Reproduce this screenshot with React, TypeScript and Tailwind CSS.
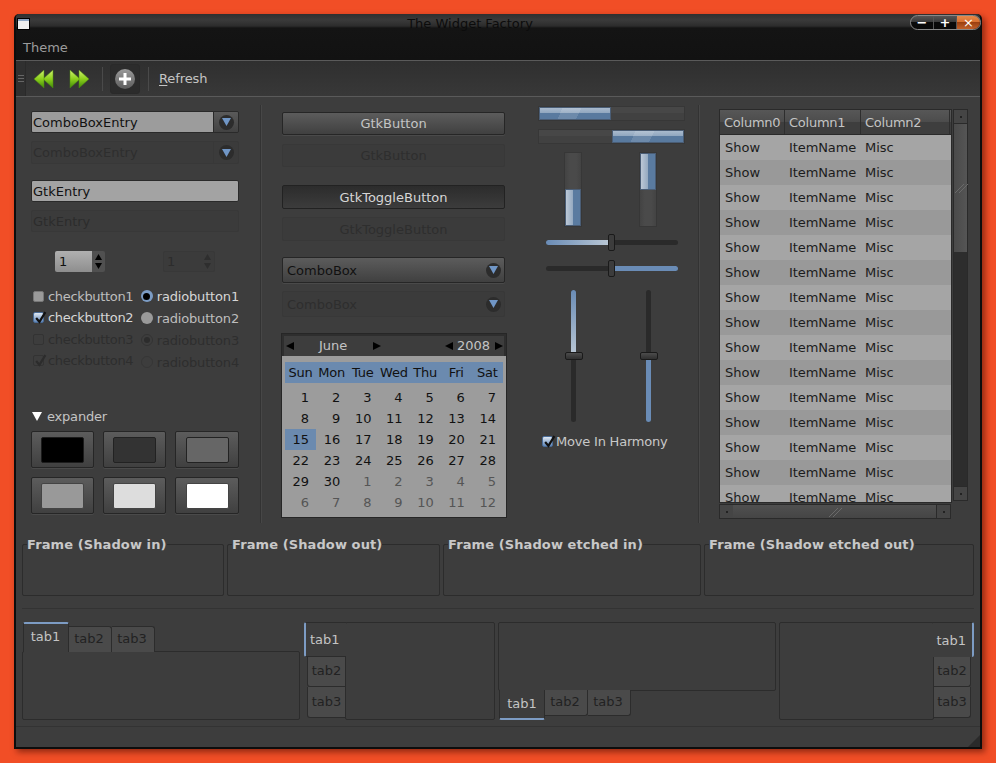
import type { FC, ReactNode } from "react";
import clsx from "clsx";

const btn = "border border-[#262626] rounded-[2px] bg-[linear-gradient(#5c5c5c,#404040)] shadow-[0_1px_0_#4a4a4a]";
const off = "border border-[#383838] rounded-[2px] bg-[#3b3b3b]";

const Tri: FC<{ dir: "up" | "down" | "left" | "right"; className?: string; w?: number; h?: number }> = ({
  dir,
  className,
  w = 8,
  h = 8,
}) => {
  const pts = { up: "4,0 8,8 0,8", down: "0,0 8,0 4,8", left: "8,0 8,8 0,4", right: "0,0 8,4 0,8" }[dir];
  return (
    <svg viewBox="0 0 8 8" width={w} height={h} preserveAspectRatio="none" className={clsx("fill-current shrink-0", className)}>
      <polygon points={pts} />
    </svg>
  );
};

const BlueArrow = () => (
  <span className="flex h-[15px] w-[15px] items-center justify-center rounded-full bg-[#2c2c2c]">
    <Tri dir="down" w={9} h={8} className="text-[#7096c6]" />
  </span>
);

const Check: FC<{ className?: string }> = ({ className }) => (
  <svg viewBox="0 0 12 12" className={clsx("absolute -top-[2px] left-0 h-[13px] w-[13px] fill-none stroke-[2]", className)}>
    <path d="M2 6.5 L5 10 L10.5 1" />
  </svg>
);

const CheckBox: FC<{ state: "plain" | "checked" | "off" | "offChecked" }> = ({ state }) => (
  <span
    className={clsx(
      "relative h-[11px] w-[11px] shrink-0 rounded-[2px]",
      state === "plain" && "bg-[#9a9a9a] border border-[#777]",
      state === "checked" && "bg-[linear-gradient(#dfe8f2,#5f86b8)] border border-[#4a6c98]",
      (state === "off" || state === "offChecked") && "border border-[#333]",
    )}
  >
    {state === "checked" && <Check className="stroke-[#111]" />}
    {state === "offChecked" && <Check className="stroke-[#2c2c2c]" />}
  </span>
);

const Radio: FC<{ state: "on" | "plain" | "offOn" | "off" }> = ({ state }) => (
  <span
    className={clsx(
      "flex h-[12px] w-[12px] shrink-0 items-center justify-center rounded-full",
      state === "on" && "bg-[#7c9cc4]",
      state === "plain" && "bg-[#9a9a9a]",
      state === "offOn" && "border border-[#333]",
      state === "off" && "border border-[#363636]",
    )}
  >
    {state === "on" && <span className="h-[7px] w-[7px] rounded-full bg-black" />}
    {state === "offOn" && <span className="h-[6px] w-[6px] rounded-full bg-[#2c2c2c]" />}
  </span>
);

const swatches = [
  "bg-[#000] border-[#1c1c1c]",
  "bg-[#333] border-[#222]",
  "bg-[#666] border-[#222]",
  "bg-[#999] border-[#444]",
  "bg-[#ddd] border-[#444]",
  "bg-[#fff] border-[#444]",
];

const LeftColumn = () => (
  <div className="ml-[15px] w-[208px] shrink-0">
    <div className="mt-[14px] flex h-[22px] overflow-hidden rounded-[2px] border border-[#2a2a2a]">
      <div className="flex flex-1 items-center bg-[#9c9c9c] pl-[1px] text-[#111]">ComboBoxEntry</div>
      <div className="flex w-[25px] items-center justify-center border-l border-[#2a2a2a] bg-[linear-gradient(#5a5a5a,#424242)]">
        <BlueArrow />
      </div>
    </div>
    <div className={clsx(off, "mt-[8px] flex h-[23px]")}>
      <div className="flex flex-1 items-center pl-[1px] text-[#2e2e2e]">ComboBoxEntry</div>
      <div className="flex w-[25px] items-center justify-center border-l border-[#383838]">
        <BlueArrow />
      </div>
    </div>
    <div className="mt-[16px] flex h-[22px] items-center rounded-[2px] border border-[#2a2a2a] bg-[#a3a3a3] pl-[1px] text-[#111]">GtkEntry</div>
    <div className={clsx(off, "mt-[8px] flex h-[22px] items-center pl-[1px] text-[#2c2c2c]")}>GtkEntry</div>
    <div className="mt-[19px] flex h-[21px]">
      <div className="ml-[24px] flex w-[50px] overflow-hidden rounded-[2px]">
        <div className="flex w-[37px] items-center bg-[linear-gradient(#b0b0b0,#8e8e8e)] pl-[4px] text-[#111]">1</div>
        <div className="flex w-[13px] flex-col items-center justify-center gap-[3px] bg-[#505050] text-black">
          <Tri dir="up" w={7} h={6} />
          <Tri dir="down" w={7} h={6} />
        </div>
      </div>
      <div className={clsx(off, "ml-[58px] flex w-[52px]")}>
        <div className="flex w-[38px] items-center pl-[3px] text-[#2c2c2c]">1</div>
        <div className="flex w-[13px] flex-col items-center justify-center gap-[3px] text-[#2e2e2e]">
          <Tri dir="up" w={7} h={6} />
          <Tri dir="down" w={7} h={6} />
        </div>
      </div>
    </div>
    <div className="ml-[2px] mt-[14px] flex">
      <div className="flex w-[111px] flex-col tracking-[-0.33px]">
        {(
          [
            ["plain", "checkbutton1", "text-[#bdbdbd]"],
            ["checked", "checkbutton2", "text-[#d6d6d6]"],
            ["off", "checkbutton3", "text-[#2e2e2e]"],
            ["offChecked", "checkbutton4", "text-[#2e2e2e]"],
          ] as const
        ).map(([state, label, color]) => (
          <div key={label} className="flex h-[21.3px] items-center gap-[4px]">
            <CheckBox state={state} />
            <span className={color}>{label}</span>
          </div>
        ))}
      </div>
      <div className="-mt-[1px] flex flex-col tracking-[-0.17px]">
        {(
          [
            ["on", "radiobutton1", "text-[#d6d6d6]"],
            ["plain", "radiobutton2", "text-[#bdbdbd]"],
            ["offOn", "radiobutton3", "text-[#2e2e2e]"],
            ["off", "radiobutton4", "text-[#2e2e2e]"],
          ] as const
        ).map(([state, label, color]) => (
          <div key={label} className="flex h-[22px] items-center gap-[4px]">
            <Radio state={state} />
            <span className={color}>{label}</span>
          </div>
        ))}
      </div>
    </div>
    <div className="ml-[1px] mt-[33px] flex h-[20px] items-center gap-[5px] tracking-[-0.2px] text-[#c4c4c4]">
      <Tri dir="down" w={10} h={9} className="text-white" />
      <span>expander</span>
    </div>
    <div className="mt-[5px] grid grid-cols-[63px_63px_64px] gap-x-[9px] gap-y-[9px]">
      {swatches.map((s) => (
        <div key={s} className={clsx(btn, "flex h-[37px] items-center justify-center")}>
          <span className={clsx("h-[26px] w-[43px] rounded-[2px] border", s)} />
        </div>
      ))}
    </div>
  </div>
);

const VSep = () => <div className="mt-[8px] h-[418px] w-[1px] shrink-0 bg-[#333] shadow-[1px_0_0_#474747]" />;

const days = ["Sun", "Mon", "Tue", "Wed", "Thu", "Fri", "Sat"];
const cells = [
  1, 2, 3, 4, 5, 6, 7, 8, 9, 10, 11, 12, 13, 14, 15, 16, 17, 18, 19, 20, 21, 22, 23, 24, 25, 26, 27, 28, 29, 30, 1, 2, 3, 4,
  5, 6, 7, 8, 9, 10, 11, 12,
];

const Calendar = () => (
  <div className="-ml-[1px] mt-[16px] h-[185px] w-[226px] border border-[#262626] bg-[#9c9c9c]">
    <div className="flex h-[22px] items-center border-2 border-b-0 border-[#2e2e2e] bg-[#3d3d3d] pb-[1px] text-[#c4c4c4]">
      <Tri dir="left" className="ml-[2px] text-black" />
      <span className="ml-[25px] w-[28px]">June</span>
      <Tri dir="right" className="ml-[26px] text-black" />
      <Tri dir="left" className="ml-auto text-black" />
      <span className="ml-[4px] mr-[5px]">2008</span>
      <Tri dir="right" className="mr-[1px] text-black" />
    </div>
    <div className="px-[3px] pt-[6px]">
      <div className="grid h-[21px] grid-cols-7 items-center bg-[#6b8aaf] text-center tracking-[-0.2px] text-[#111]">
        {days.map((d) => (
          <span key={d}>{d}</span>
        ))}
      </div>
      <div className="mt-[4px] grid grid-cols-7 auto-rows-[21px] items-center text-right">
        {cells.map((n, i) => (
          <span
            key={i}
            className={clsx(
              "flex h-[21px] items-center justify-end pr-[7px]",
              i === 14 && "bg-[#6b8aaf]",
              i < 30 ? "text-[#111]" : "text-[#555]",
            )}
          >
            {n}
          </span>
        ))}
      </div>
    </div>
  </div>
);

const CenterColumn = () => (
  <div className="ml-[21px] w-[223px] shrink-0">
    <div className={clsx(btn, "mt-[15px] flex h-[23px] items-center justify-center text-[#c4c4c4]")}>GtkButton</div>
    <div className={clsx(off, "mt-[9px] flex h-[23px] items-center justify-center text-[#2e2e2e]")}>GtkButton</div>
    <div className="mt-[18px] flex h-[24px] items-center justify-center rounded-[2px] border border-[#222] bg-[linear-gradient(#2c2c2c,#3c3c3c)] text-[#d6d6d6]">
      GtkToggleButton
    </div>
    <div className={clsx(off, "mt-[8px] flex h-[24px] items-center justify-center text-[#2e2e2e]")}>GtkToggleButton</div>
    <div className={clsx(btn, "mt-[16px] flex h-[26px] items-center justify-between pl-[4px] pr-[3px] text-[#111]")}>
      ComboBox
      <BlueArrow />
    </div>
    <div className={clsx(off, "mt-[8px] flex h-[26px] items-center justify-between pl-[4px] pr-[3px] text-[#2e2e2e]")}>
      ComboBox
      <BlueArrow />
    </div>
    <Calendar />
  </div>
);

const fillH =
  "bg-[linear-gradient(115deg,transparent_30%,rgba(255,255,255,0.12)_30%,rgba(255,255,255,0.12)_55%,transparent_55%),linear-gradient(#a9bacd,#8ea5be_50%,#597a9f_50%,#597a9f)] border border-[#4a5d75]";
const fillV = "bg-[linear-gradient(90deg,#bcc8d6,#94a9c0_50%,#5a7ba0_50%,#5a7ba0)] border border-[#4a5d75]";
const troughH = "border border-[#373737] bg-[linear-gradient(#474747,#474747_50%,#414141_50%)]";
const troughV = "border border-[#373737] bg-[linear-gradient(90deg,#434343,#4a4a4a_30%,#4a4a4a_70%,#434343)]";

const ThumbH = () => <span className="absolute -top-[6px] left-[62px] h-[17px] w-[7px] rounded-[2px] border border-[#1a1a1a] bg-[#3c3c3c]" />;
const ThumbV = () => (
  <span className="absolute left-1/2 top-[62px] h-[8px] w-[18px] -translate-x-1/2 rounded-[2px] border border-[#1a1a1a] bg-[linear-gradient(#4c4c4c,#303030)]" />
);

const RightColumn = () => (
  <div className="ml-[33px] w-[147px] shrink-0">
    <div className={clsx(troughH, "mt-[9px] h-[15px]")}>
      <div className={clsx(fillH, "h-full w-[72px]")} />
    </div>
    <div className={clsx(troughH, "mt-[8px] flex h-[15px] justify-end")}>
      <div className={clsx(fillH, "h-full w-[72px]")} />
    </div>
    <div className="mt-[8px] flex h-[75px] pl-[26px]">
      <div className={clsx(troughV, "flex w-[18px] flex-col justify-end")}>
        <div className={clsx(fillV, "h-[37px]")} />
      </div>
      <div className={clsx(troughV, "ml-[57px] w-[18px]")}>
        <div className={clsx(fillV, "h-[37px]")} />
      </div>
    </div>
    <div className="relative ml-[8px] mt-[13px] h-[5px] w-[132px] rounded-full bg-[#2a2a2a]">
      <div className="h-full w-[62px] rounded-l-full bg-[linear-gradient(90deg,#6a8cb6,#b8c6d4)]" />
      <ThumbH />
    </div>
    <div className="relative ml-[8px] mt-[21px] flex h-[5px] w-[132px] justify-end rounded-full bg-[#2a2a2a]">
      <div className="h-full w-[68px] rounded-r-full bg-[#6a8cb6]" />
      <ThumbH />
    </div>
    <div className="mt-[19px] flex h-[132px] pl-[33px]">
      <div className="relative h-full w-[5px] rounded-full bg-[#2a2a2a]">
        <div className="h-[64px] rounded-t-full bg-[linear-gradient(#6a8cb6,#b8c6d4)]" />
        <ThumbV />
      </div>
      <div className="relative ml-[70px] flex h-full w-[5px] flex-col justify-end rounded-full bg-[#2a2a2a]">
        <div className="h-[62px] rounded-b-full bg-[#6a8cb6]" />
        <ThumbV />
      </div>
    </div>
    <div className="ml-[4px] mt-[10px] flex h-[18px] items-center gap-[3px] tracking-[-0.2px] text-[#c8c8c8]">
      <CheckBox state="checked" />
      Move In Harmony
    </div>
  </div>
);

const ScrollBtn: FC<{ className?: string }> = ({ className }) => (
  <div className={clsx("flex h-[15px] w-[15px] shrink-0 items-center justify-center border border-[#2a2a2a] bg-[#454545]", className)}>
    <span className="h-[2px] w-[2px] bg-[#222]" />
  </div>
);

const Grip: FC<{ className?: string }> = ({ className }) => (
  <svg viewBox="0 0 14 10" className={clsx("h-[10px] w-[14px] fill-none stroke-[#6a6a6a]", className)}>
    <path d="M1 10 L10 1 M5 10 L14 1" />
  </svg>
);

const Tree = () => (
  <div className="ml-[20px] mt-[12px] flex shrink-0">
    <div>
      <div className="h-[394px] w-[233px] overflow-hidden border border-[#2a2a2a] bg-[#a5a5a5]">
        <div className="flex h-[25px] border-b border-[#2a2a2a] bg-[linear-gradient(#575757,#4c4c4c_50%,#3e3e3e_50%,#3e3e3e)] tracking-[-0.25px] text-[#c4c4c4]">
          <div className="flex w-[65px] items-center border-r border-[#2e2e2e] pl-[4px]">Column0</div>
          <div className="flex w-[76px] items-center border-r border-[#2e2e2e] pl-[4px]">Column1</div>
          <div className="flex w-[89px] items-center border-r border-[#2e2e2e] pl-[4px]">Column2</div>
        </div>
        {Array.from({ length: 15 }, (_, i) => (
          <div key={i} className={clsx("flex h-[25px] shrink-0 items-center text-[#1c1c1c]", i % 2 === 0 ? "bg-[#a5a5a5]" : "bg-[#999999]")}>
            <span className="w-[69px] pl-[5px]">Show</span>
            <span className="w-[76px] tracking-[-0.1px]">ItemName</span>
            <span>Misc</span>
          </div>
        ))}
      </div>
      <div className="mt-[1px] flex h-[15px] w-[232px] border border-[#2a2a2a]">
        <ScrollBtn className="-m-[1px]" />
        <div className="flex flex-1 items-center justify-center bg-[linear-gradient(#505050,#454545)]">
          <Grip />
        </div>
        <ScrollBtn className="-m-[1px]" />
      </div>
    </div>
    <div className="ml-[1px] flex h-[392px] w-[15px] flex-col border border-[#2a2a2a] bg-[#2d2d2d]">
      <ScrollBtn className="-mx-[1px] -mt-[1px]" />
      <div className="flex h-[128px] flex-col items-center justify-center bg-[linear-gradient(90deg,#4a4a4a,#555)]">
        <Grip />
      </div>
      <div className="flex-1" />
      <ScrollBtn className="-mx-[1px] -mb-[1px]" />
    </div>
  </div>
);

const Frame: FC<{ title: string; className: string }> = ({ title, className }) => (
  <fieldset className={clsx("h-[59px] rounded-[2px] border border-[#2c2c2c] pl-[4px]", className)}>
    <legend className="font-bold tracking-[0.1px] text-[#c8c8c8]">{title}</legend>
  </fieldset>
);

const tabIdle = "flex items-center justify-center border border-[#2c2c2c] bg-[#4a4a4a] text-[#222]";
const tabOn = "text-[#c4c4c4] bg-[#3d3d3d]";

const Notebooks = () => (
  <div className="ml-[6px] mt-[13px] flex h-[98px] gap-[3px] text-[13px]">
    {/* top */}
    <div className="flex w-[278px] flex-col">
      <div className="relative z-10 flex h-[30px] items-end pl-[1px]">
        <div className={clsx(tabOn, "flex h-[30px] w-[46px] items-center justify-center rounded-t-[2px] border-x border-[#2c2c2c] border-t-2 border-t-[#7d9cc4] pb-[4px] pr-[1px]")}>tab1</div>
        <div className={clsx(tabIdle, "h-[26px] w-[43px] rounded-tr-[3px] border-l-0 border-b-0 pb-[2px] pr-[2px]")}>tab2</div>
        <div className={clsx(tabIdle, "h-[26px] w-[43px] rounded-tr-[3px] border-l-0 border-b-0 pb-[2px] pr-[2px]")}>tab3</div>
      </div>
      <div className="-mt-[1px] flex-1 rounded-[2px] border border-[#2c2c2c]" />
    </div>
    {/* left */}
    <div className="flex w-[192px]">
      <div className="relative z-10 -mr-[1px] flex w-[43px] flex-col items-end">
        <div className={clsx(tabOn, "flex h-[35px] w-[42px] items-center rounded-l-[2px] border-y border-[#2c2c2c] border-l-2 border-l-[#7d9cc4] pl-[4px]")}>tab1</div>
        <div className={clsx(tabIdle, "h-[30px] w-[39px] rounded-bl-[3px] border-t-0 pb-[2px]")}>tab2</div>
        <div className={clsx(tabIdle, "h-[31px] w-[39px] rounded-bl-[3px] border-t-0 pb-[2px]")}>tab3</div>
      </div>
      <div className="flex-1 rounded-[2px] border border-[#2c2c2c]" />
    </div>
    {/* bottom */}
    <div className="flex w-[278px] flex-col">
      <div className="-mb-[1px] flex-1 rounded-[2px] border border-[#2c2c2c]" />
      <div className="relative z-10 flex h-[30px] items-start pl-[1px]">
        <div className={clsx(tabOn, "flex h-[30px] w-[46px] items-center justify-center rounded-b-[2px] border-x border-b-2 border-x-[#2c2c2c] border-b-[#7d9cc4] pb-[1px]")}>tab1</div>
        <div className={clsx(tabIdle, "h-[26px] w-[43px] rounded-br-[3px] border-l-0 border-t-0 pb-[2px] pr-[2px]")}>tab2</div>
        <div className={clsx(tabIdle, "h-[26px] w-[43px] rounded-br-[3px] border-l-0 border-t-0 pb-[2px] pr-[2px]")}>tab3</div>
      </div>
    </div>
    {/* right */}
    <div className="flex w-[195px]">
      <div className="flex-1 rounded-[2px] border border-[#2c2c2c]" />
      <div className="relative z-10 -ml-[1px] flex w-[41px] flex-col items-start">
        <div className={clsx(tabOn, "flex h-[35px] w-[41px] items-center justify-end rounded-r-[2px] border-t border-r-2 border-t-[#2c2c2c] border-r-[#7d9cc4] pr-[6px]")}>tab1</div>
        <div className={clsx(tabIdle, "h-[30px] w-[38px] rounded-br-[3px] border-t-0 pb-[2px]")}>tab2</div>
        <div className={clsx(tabIdle, "h-[31px] w-[38px] rounded-br-[3px] border-t-0 pb-[2px]")}>tab3</div>
      </div>
    </div>
  </div>
);

const Arrows: FC<{ flip?: boolean; id: string }> = ({ flip, id }) => (
  <svg viewBox="0 0 20 20" className={clsx("h-[20px] w-[20px]", flip && "-scale-x-100")}>
    <defs>
      <linearGradient id={id} x1="0" y1="0" x2="0" y2="1">
        <stop offset="0" stopColor="#d2f270" />
        <stop offset="0.5" stopColor="#8ccf1c" />
        <stop offset="1" stopColor="#3f8a08" />
      </linearGradient>
    </defs>
    <polygon points="9,10 19,1 19,19" fill={`url(#${id})`} stroke="#4d8c10" strokeWidth="0.5" />
    <polygon points="0,10 10,1 10,19" fill={`url(#${id})`} stroke="#4d8c10" strokeWidth="0.5" />
  </svg>
);

const ToolSep = () => <span className="block h-[24px] w-[1px] bg-[#4a4a4a]" />;

const WinButton: FC<{ children: ReactNode; className?: string }> = ({ children, className }) => (
  <span className={clsx("flex h-[13px] items-center justify-center text-[13px] font-bold leading-[13px] text-white", className)}>{children}</span>
);

export default function App() {
  return (
    <div className="h-[763px] w-[996px] overflow-hidden bg-[#f14e26] pl-[14px] pt-[14px] font-['DejaVu_Sans',sans-serif] text-[13px] leading-[15px]">
      <div className="relative flex h-[735px] w-[968px] flex-col rounded-t-[5px] border-x-2 border-b-2 border-[#0d0d0d] bg-[#3d3d3d] shadow-[3px_3px_6px_rgba(60,10,0,0.55)]">
        {/* title + menu */}
        <div className="h-[46px] shrink-0 rounded-t-[4px] bg-[linear-gradient(#2f2f2f,#3a3a3a_6px,#2c2c2c_12px,#141414_14px,#121212)]">
          <div className="relative flex h-[18px] items-center justify-center pr-[56px] text-[#0c0c0c]">
            <span className="absolute left-[1px] top-[4px] h-[12px] w-[13px] border border-black bg-[linear-gradient(#8ea6c4,#8ea6c4_25%,#eee_25%)]" />
            <span>The Widget Factory</span>
          </div>
          <div className="mt-[2px] flex h-[26px] items-center pl-[7px] text-[#9c9c9c]">Theme</div>
        </div>
        {/* window buttons */}
        <div className="absolute -right-[1px] top-[1px] flex h-[15px] w-[71px] rounded-full border border-[#888] bg-[linear-gradient(#555,#3a3a3a_45%,#0a0a0a_50%,#0a0a0a)]">
          <WinButton className="w-[23px] border-r border-[#555]">−</WinButton>
          <WinButton className="w-[23px] border-r border-[#555]">+</WinButton>
          <WinButton className="flex-1 rounded-r-full bg-[linear-gradient(#e88a4a,#d87030_45%,#9c4010_50%,#c0602a)] text-[12px] font-normal">×</WinButton>
        </div>
        {/* toolbar */}
        <div className="flex h-[37px] shrink-0 items-center border-y border-[#5a5a5a] bg-[linear-gradient(#2f2f2f,#383838)]">
          <div className="flex h-full w-[10px] flex-col items-center justify-center gap-[2px] border-r border-[#2a2a2a] bg-[#303030]">
            <span className="h-[1px] w-[6px] bg-[#666]" />
            <span className="h-[1px] w-[6px] bg-[#666]" />
            <span className="h-[1px] w-[6px] bg-[#666]" />
          </div>
          <div className="ml-[8px] flex items-center">
            <Arrows id="arrowA" />
            <span className="w-[15px]" />
            <Arrows id="arrowB" flip />
          </div>
          <span className="ml-[13px]">
            <ToolSep />
          </span>
          <div className="ml-[7px] flex h-[30px] w-[30px] items-center justify-center rounded-[3px] border border-[#2a2a2a] bg-[#2c2c2c]">
            <svg viewBox="0 0 20 20" className="h-[20px] w-[20px]">
              <defs>
                <linearGradient id="plusDisc" x1="0" y1="0" x2="0" y2="1">
                  <stop offset="0" stopColor="#9a9a9a" />
                  <stop offset="1" stopColor="#5c5c5c" />
                </linearGradient>
              </defs>
              <circle cx="10" cy="10" r="10" fill="url(#plusDisc)" />
              <path d="M10 4 V16 M4 10 H16" stroke="#fff" strokeWidth="3" />
            </svg>
          </div>
          <span className="ml-[8px]">
            <ToolSep />
          </span>
          <span className="ml-[10px] tracking-[-0.1px] text-[#c4c4c4]">
            <span className="underline underline-offset-[2px]">R</span>efresh
          </span>
        </div>
        {/* widgets */}
        <div className="flex h-[433px] shrink-0">
          <LeftColumn />
          <div className="ml-[21px]">
            <VSep />
          </div>
          <CenterColumn />
          <RightColumn />
          <div className="ml-[13px]">
            <VSep />
          </div>
          <Tree />
        </div>
        {/* frames */}
        <div className="ml-[6px] mt-[7px] flex gap-[3px]">
          <Frame title="Frame (Shadow in)" className="w-[202px]" />
          <Frame title="Frame (Shadow out)" className="w-[213px]" />
          <Frame title="Frame (Shadow etched in)" className="w-[258px]" />
          <Frame title="Frame (Shadow etched out)" className="w-[270px]" />
        </div>
        <div className="ml-[6px] mr-[6px] mt-[12px] h-[1px] shrink-0 bg-[#333]" />
        <Notebooks />
        <div className="mt-[6px] h-[1px] shrink-0 bg-[#333]" />
        {/* resize grip */}
        <span className="absolute bottom-0 right-0 h-0 w-0 border-b-[12px] border-l-[12px] border-b-[#2a2a2a] border-l-transparent" />
      </div>
    </div>
  );
}
